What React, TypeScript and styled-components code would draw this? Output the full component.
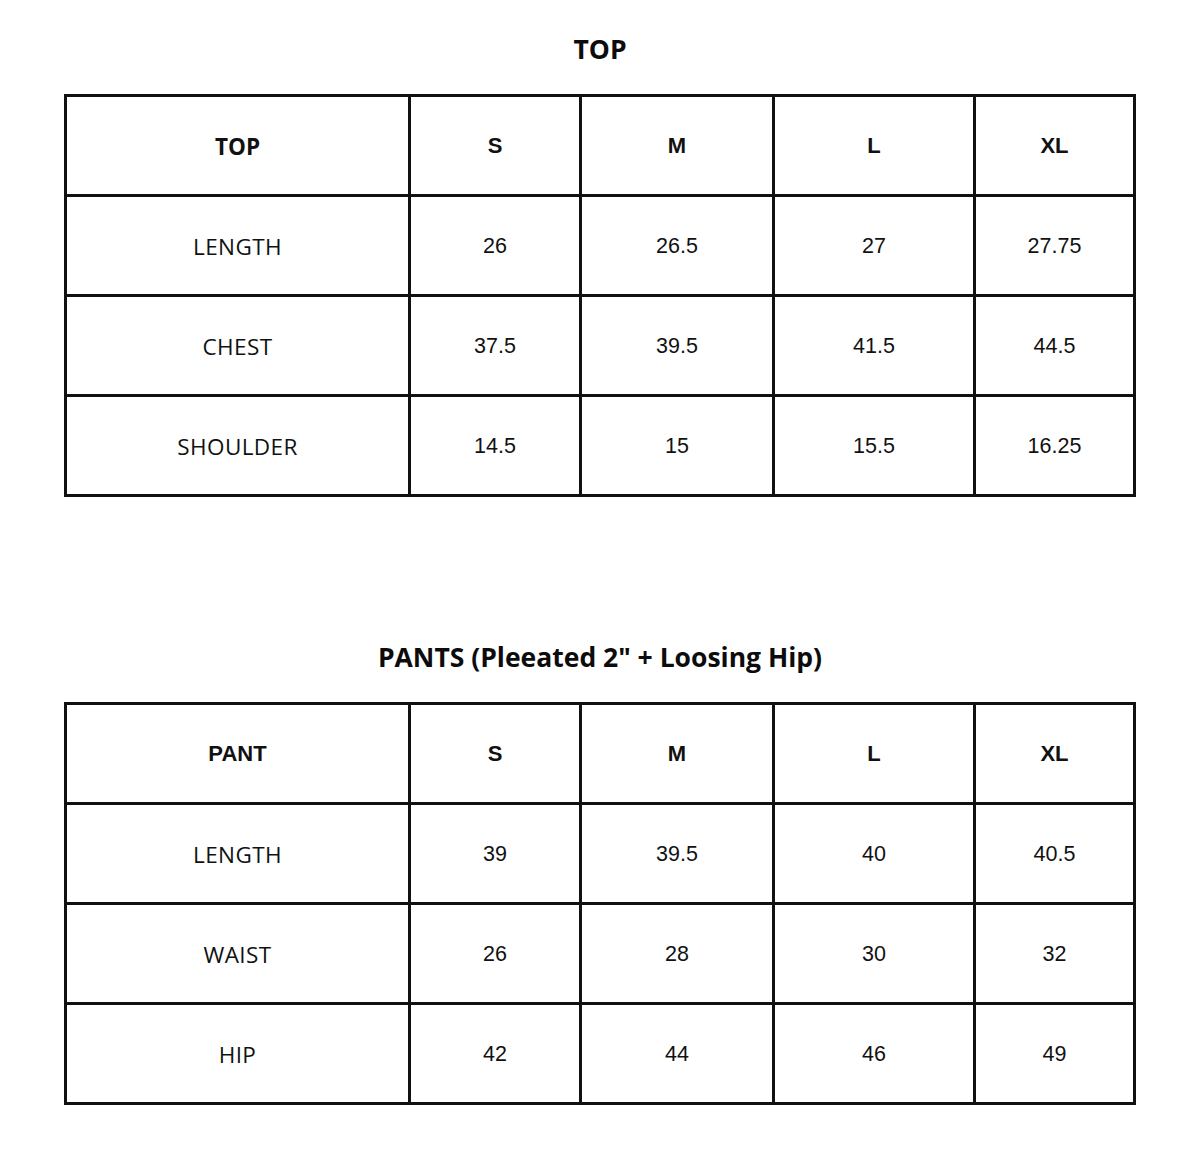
import React from 'react';
import styled, { createGlobalStyle } from 'styled-components';

const GlobalStyle = createGlobalStyle`
  html, body {
    margin: 0;
    padding: 0;
    background: #ffffff;
  }
  body {
    font-family: 'Open Sans', 'Liberation Sans', sans-serif;
    color: #111111;
  }
`;

const Page = styled.div`
  width: 1200px;
  min-height: 1165px;
  padding: 31px 64px 0;
  box-sizing: border-box;
  display: flex;
  flex-direction: column;
`;

const Section = styled.section<{ $gap?: number }>`
  display: flex;
  flex-direction: column;
  margin-top: ${(p) => p.$gap ?? 0}px;
`;

const Title = styled.h2`
  margin: 0 0 27px;
  font-family: 'Open Sans', sans-serif;
  font-size: 26.5px;
  font-weight: 700;
  line-height: 36px;
  text-align: center;
  color: #0c0c0c;
`;

const Grid = styled.div`
  display: grid;
  grid-template-columns: 344px 171px 193px 201px 160px;
  grid-auto-rows: 100px;
  width: 1072px;
  box-sizing: border-box;
  border-left: 3px solid #111;
  border-top: 3px solid #111;
`;

const Cell = styled.div<{ $head?: boolean; $label?: boolean }>`
  display: flex;
  align-items: center;
  justify-content: center;
  box-sizing: border-box;
  border-right: 3px solid #111;
  border-bottom: 3px solid #111;
  font-family: ${(p) =>
    p.$label ? "'Open Sans', sans-serif" : "'Liberation Sans', Arial, sans-serif"};
  font-size: ${(p) => (p.$label ? 22.5 : p.$head ? 22 : 21.5)}px;
  font-weight: ${(p) => (p.$head ? 700 : 400)};
  letter-spacing: ${(p) => (p.$label && !p.$head ? '0.4px' : '0')};
  color: #111;
  padding-top: 1px;
`;

type TableData = {
  title: string;
  corner: string;
  rows: [string, string[]][];
};

const sizes = ['S', 'M', 'L', 'XL'];

const tables: TableData[] = [
  {
    title: 'TOP',
    corner: 'TOP',
    rows: [
      ['LENGTH', ['26', '26.5', '27', '27.75']],
      ['CHEST', ['37.5', '39.5', '41.5', '44.5']],
      ['SHOULDER', ['14.5', '15', '15.5', '16.25']],
    ],
  },
  {
    title: 'PANTS (Pleeated 2" + Loosing Hip)',
    corner: 'PANT',
    rows: [
      ['LENGTH', ['39', '39.5', '40', '40.5']],
      ['WAIST', ['26', '28', '30', '32']],
      ['HIP', ['42', '44', '46', '49']],
    ],
  },
];

const SizeTable = ({ data }: { data: TableData }) => (
  <Grid>
    <Cell $head $label={data.corner === 'TOP'}>
      {data.corner}
    </Cell>
    {sizes.map((s) => (
      <Cell key={s} $head>
        {s}
      </Cell>
    ))}
    {data.rows.map(([label, values]) => (
      <React.Fragment key={label}>
        <Cell $label>{label}</Cell>
        {values.map((v, i) => (
          <Cell key={i}>{v}</Cell>
        ))}
      </React.Fragment>
    ))}
  </Grid>
);

export default function App() {
  return (
    <>
      <GlobalStyle />
      <Page>
        {tables.map((t, i) => (
          <Section key={t.title} $gap={i === 0 ? 0 : 142}>
            <Title>{t.title}</Title>
            <SizeTable data={t} />
          </Section>
        ))}
      </Page>
    </>
  );
}
